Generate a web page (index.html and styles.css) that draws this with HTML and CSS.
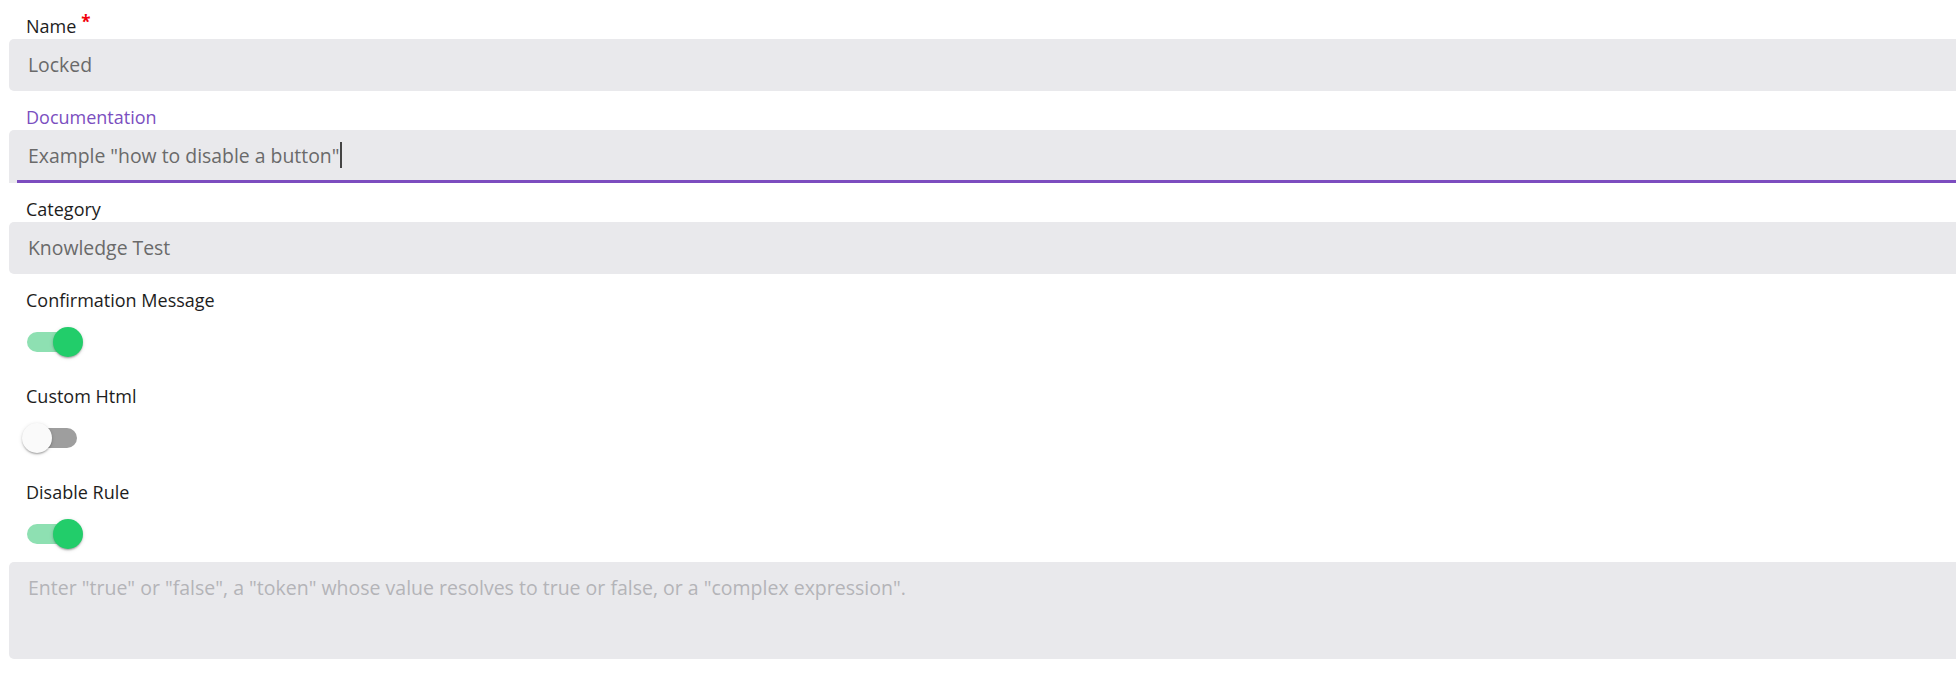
FILE: index.html
```html
<!DOCTYPE html>
<html lang="en">
<head>
<meta charset="utf-8">
<title>Rule form</title>
<link rel="stylesheet" href="styles.css">
</head>
<body>
<div class="form">
  <div class="field-group">
    <div class="label">Name<span class="req">*</span></div>
    <div class="input">Locked</div>
  </div>
  <div class="field-group">
    <div class="label label-focused">Documentation</div>
    <div class="input input-focused"><span>Example "how to disable a button"</span><span class="caret"></span></div>
  </div>
  <div class="field-group">
    <div class="label">Category</div>
    <div class="input">Knowledge Test</div>
  </div>
  <div class="toggle-group">
    <div class="label">Confirmation Message</div>
    <div class="toggle-row">
      <div class="track track-on"><div class="thumb thumb-on"></div></div>
    </div>
  </div>
  <div class="toggle-group">
    <div class="label">Custom Html</div>
    <div class="toggle-row">
      <div class="track track-off"><div class="thumb thumb-off"></div></div>
    </div>
  </div>
  <div class="toggle-group toggle-group-last">
    <div class="label">Disable Rule</div>
    <div class="toggle-row">
      <div class="track track-on"><div class="thumb thumb-on"></div></div>
    </div>
  </div>
  <div class="textarea"><span class="placeholder">Enter "true" or "false", a "token" whose value resolves to true or false, or a "complex expression".</span></div>
</div>
</body>
</html>
```
FILE: styles.css
```css
html, body {
  margin: 0;
  padding: 0;
  background: #ffffff;
  overflow: hidden;
}

body {
  font-family: "Open Sans", "Noto Sans", "Liberation Sans", sans-serif;
  width: 1956px;
  height: 676px;
}

.form {
  display: flex;
  flex-direction: column;
  padding: 15px 0 0 9px;
  width: 1990px;
}

.label {
  font-size: 18px;
  line-height: 23px;
  height: 23px;
  padding-left: 17px;
  color: #1d1d1d;
  white-space: nowrap;
}

.label-focused {
  color: #7b4fc0;
}

.req {
  color: #f2000b;
  font-weight: 700;
  font-size: 17px;
  margin-left: 5px;
  vertical-align: 5px;
  line-height: 0;
}

.field-group {
  display: flex;
  flex-direction: column;
  margin-bottom: 15px;
}

.input {
  position: relative;
  margin-top: 1px;
  height: 52px;
  box-sizing: border-box;
  background: #e9e9ec;
  border-radius: 5px;
  padding-left: 19px;
  padding-bottom: 1px;
  display: flex;
  align-items: center;
  font-size: 19.4px;
  color: #6a6a6a;
  white-space: nowrap;
}

.input-focused {
  height: 53px;
  padding-bottom: 3px;
  border-radius: 5px 5px 0 0;
}

.input-focused::after {
  content: "";
  position: absolute;
  left: 8px;
  right: 0;
  bottom: 0;
  height: 3px;
  background: #7c4dbf;
}

.caret {
  display: inline-block;
  width: 2px;
  height: 26px;
  margin-left: 1px;
  background: #444444;
  align-self: center;
}

.toggle-group {
  display: flex;
  flex-direction: column;
  margin-bottom: 19px;
}

.toggle-group-last {
  margin-bottom: 4px;
}

.toggle-row {
  margin-top: 6px;
  height: 48px;
  padding-left: 18px;
  display: flex;
  align-items: center;
}

.track {
  width: 50px;
  height: 20px;
  border-radius: 10px;
  display: flex;
  align-items: center;
}

.track-on {
  background: #8ee0b2;
}

.track-off {
  background: #9e9e9e;
}

.thumb {
  flex: none;
  width: 30px;
  height: 30px;
  border-radius: 50%;
  box-shadow: 0 2px 2px -1px rgba(0, 0, 0, 0.2), 0 1px 2px 0 rgba(0, 0, 0, 0.14), 0 1px 4px 0 rgba(0, 0, 0, 0.12);
}

.thumb-on {
  background: #22cd6a;
  margin-left: 26px;
}

.thumb-off {
  background: #fafafa;
  margin-left: -5px;
}

.textarea {
  height: 97px;
  box-sizing: border-box;
  background: #e9e9ec;
  border-radius: 5px;
  padding: 13px 19px;
  font-size: 19.5px;
  line-height: 26.7px;
  white-space: nowrap;
}

.placeholder {
  color: #b4b4b8;
}
```
